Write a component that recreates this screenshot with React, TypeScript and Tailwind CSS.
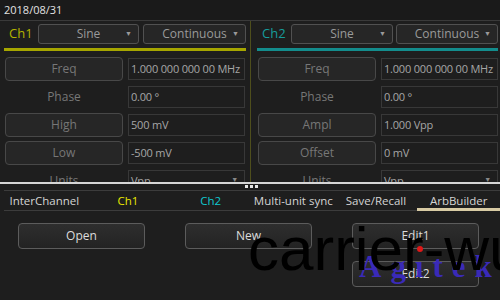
import React from "react";

type Row = { label: string; value: string; button: boolean; select?: boolean };

const ch1Rows: Row[] = [
  { label: "Freq", value: "1.000 000 000 00 MHz", button: true },
  { label: "Phase", value: "0.00 °", button: false },
  { label: "High", value: "500 mV", button: true },
  { label: "Low", value: "-500 mV", button: true },
  { label: "Units", value: "Vpp", button: false, select: true },
];

const ch2Rows: Row[] = [
  { label: "Freq", value: "1.000 000 000 00 MHz", button: true },
  { label: "Phase", value: "0.00 °", button: false },
  { label: "Ampl", value: "1.000 Vpp", button: true },
  { label: "Offset", value: "0 mV", button: true },
  { label: "Units", value: "Vpp", button: false, select: true },
];

const tabs = [
  { name: "InterChannel", color: "text-[#d4d4d4]" },
  { name: "Ch1", color: "text-[#e8e800]" },
  { name: "Ch2", color: "text-[#10c8d0]" },
  { name: "Multi-unit sync", color: "text-[#d4d4d4]" },
  { name: "Save/Recall", color: "text-[#d4d4d4]" },
  { name: "ArbBuilder", color: "text-[#d4d4d4]", active: true },
];

const Dropdown = ({ text, width }: { text: string; width: string }) => (
  <div
    className={`${width} h-[20px] relative flex items-center justify-center rounded-[3px] border border-[#515151] bg-[#262626] text-[12px] text-[#9a9a9a]`}
  >
    {text}
    <span className="absolute right-[6px] top-[4px] text-[7px] text-[#9a9a9a]">▼</span>
  </div>
);

const Channel = ({
  name,
  rows,
  nameColor,
  lineColor,
  left,
}: {
  name: string;
  rows: Row[];
  nameColor: string;
  lineColor: string;
  left: boolean;
}) => (
  <div
    className={
      left
        ? "w-[251px] shrink-0 border-r border-[#4e4e1c] pl-[4px] pr-[4px] pt-[3px]"
        : "flex-1 pl-[6px] pr-[2px] pt-[3px]"
    }
  >
    {/* header */}
    <div className="flex items-center h-[20px]">
      <div className={`w-[34px] pl-[5px] text-[13px] ${nameColor}`}>{name}</div>
      <div className={`flex ${left ? "gap-[4px]" : "gap-[3px]"}`}>
        <Dropdown text="Sine" width={left ? "w-[101px]" : "w-[102px]"} />
        <Dropdown text="Continuous" width={left ? "w-[103px]" : "w-[102px]"} />
      </div>
    </div>
    <div className={`mt-[4px] h-[3px] ${lineColor}`} />

    {/* rows */}
    <div className="mt-[6px] flex flex-col gap-[4px] pl-[1px]">
      {rows.map((r) => (
        <div key={r.label} className="flex items-center h-[24px] gap-[5px]">
          <div
            className={`w-[118px] h-[24px] flex items-center justify-center text-[12px] text-[#777777] ${
              r.button ? "rounded-[4px] border border-[#484848] bg-[#262626]" : ""
            }`}
          >
            {r.label}
          </div>
          <div className="w-[117px] h-[22px] relative flex items-center pl-[2px] border border-[#383838] text-[11px] tracking-[-0.2px] text-[#a6a6a6] whitespace-nowrap overflow-hidden">
            {r.value}
            {r.select && (
              <span className="absolute right-[6px] top-[4px] text-[7px] text-[#888]">▼</span>
            )}
          </div>
        </div>
      ))}
    </div>
  </div>
);

const Btn = ({ label }: { label: string }) => (
  <div className="w-[127px] h-[26px] flex items-center justify-center rounded-[4px] border border-[#5c5c5c] bg-gradient-to-b from-[#2e2e2e] to-[#232323] text-[12px] text-[#dcdcdc]">
    {label}
  </div>
);

export default function App() {
  return (
    <div className="relative w-[500px] h-[300px] overflow-hidden bg-[#1e1e1e] font-['Open_Sans','Noto_Sans',sans-serif]">
      {/* Top bar */}
      <div className="h-[21px] flex items-center pl-[4px] border-b border-[#3a3a3a] bg-[#1a1a1a] text-[11px] text-[#e2e2e2]">
        2018/08/31
      </div>

      {/* Channels */}
      <div className="flex h-[161px] overflow-hidden">
        <Channel name="Ch1" rows={ch1Rows} nameColor="text-[#b4b400]" lineColor="bg-[#a6a600]" left />
        <Channel name="Ch2" rows={ch2Rows} nameColor="text-[#169c9c]" lineColor="bg-[#138c8c]" left={false} />
      </div>

      {/* Divider */}
      <div className="relative h-[2px] bg-[#d6d6d6]">
        <div className="absolute left-[245px] top-[3px] flex gap-[2px]">
          <div className="w-[3px] h-[3px] bg-[#e6e6e6]" />
          <div className="w-[3px] h-[3px] bg-[#e6e6e6]" />
          <div className="w-[3px] h-[3px] bg-[#e6e6e6]" />
        </div>
      </div>

      {/* Tabs */}
      <div className="mt-[6px] ml-[4px] h-[21px] border-y border-[#3c3c3c] grid grid-cols-6">
        {tabs.map((t, i) => (
          <div
            key={t.name}
            className={`relative flex items-center justify-center text-[11.5px] whitespace-nowrap ${t.color} ${
              i === 0 ? "-ml-[2px]" : ""
            }`}
          >
            {t.name}
            {t.active && <div className="absolute left-0 right-0 bottom-[-1px] h-[3px] bg-[#d8cba4]" />}
          </div>
        ))}
      </div>

      {/* ArbBuilder buttons */}
      <div className="mt-[12px] pl-[18px] flex gap-[40px]">
        <Btn label="Open" />
        <Btn label="New" />
        <div className="flex flex-col gap-[12px]">
          <Btn label="Edit1" />
          <Btn label="Edit2" />
        </div>
      </div>

      {/* watermarks */}
      <div className="absolute left-[359px] top-[251px] font-['Liberation_Serif',serif] text-[31px] font-bold leading-none tracking-[9px] text-[#3a2ab8] whitespace-nowrap">
        Agıtek
      </div>
      <div className="absolute left-[417px] top-[246px] w-[6px] h-[6px] rounded-full bg-[#e01818]" />
      <div className="absolute left-[248px] top-[218px] font-['Liberation_Sans',sans-serif] text-[62px] leading-none text-black whitespace-nowrap">
        carrier-wu
      </div>
    </div>
  );
}
